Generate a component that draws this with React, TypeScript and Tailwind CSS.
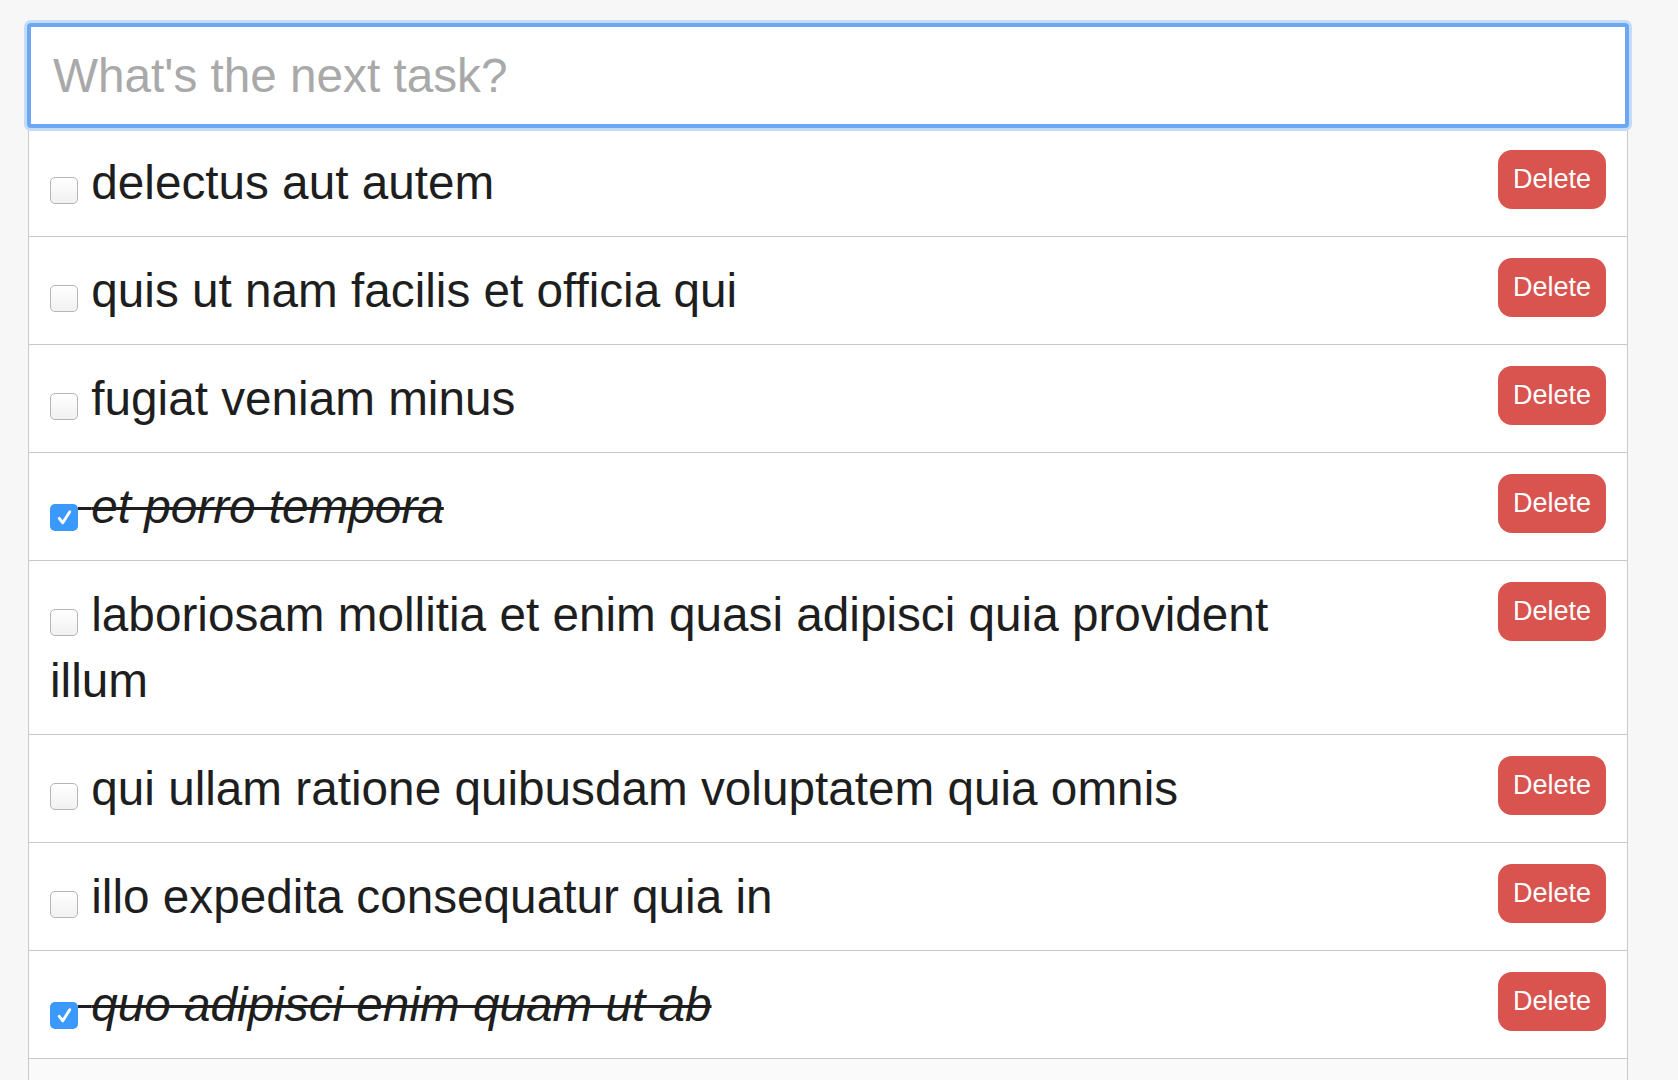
import React from 'react';

type Task = { id: number; title: string; done: boolean };

const tasks: Task[] = [
  { id: 1, title: 'delectus aut autem', done: false },
  { id: 2, title: 'quis ut nam facilis et officia qui', done: false },
  { id: 3, title: 'fugiat veniam minus', done: false },
  { id: 4, title: 'et porro tempora', done: true },
  { id: 5, title: 'laboriosam mollitia et enim quasi adipisci quia provident illum', done: false },
  { id: 6, title: 'qui ullam ratione quibusdam voluptatem quia omnis', done: false },
  { id: 7, title: 'illo expedita consequatur quia in', done: false },
  { id: 8, title: 'quo adipisci enim quam ut ab', done: true },
];

const Checkbox = ({ checked }: { checked: boolean }) =>
  checked ? (
    <span className="inline-flex items-center justify-center w-[28px] h-[27px] rounded-[5px] bg-[#3b99fc] align-[-5px]">
      <svg viewBox="0 0 16 16" className="w-[21px] h-[21px]" fill="none">
        <path d="M4 8.6 L6.7 12 L12 3.6" stroke="#fff" strokeWidth="2.2" strokeLinecap="round" strokeLinejoin="round" />
      </svg>
    </span>
  ) : (
    <span className="inline-block w-[28px] h-[27px] rounded-[5px] border border-[#b5b5b5] bg-gradient-to-b from-white to-[#f1f1f1] align-[-5px]" />
  );

const TaskRow = ({ task }: { task: Task }) => (
  <li className="flex items-start justify-between border-b border-[#c9c9c9] px-[21px] py-[20.5px]">
    <div className="w-[1280px] text-[47.7px] leading-[66px] text-[#1e1e1e]">
      <Checkbox checked={task.done} />
      <span className={task.done ? 'italic line-through decoration-[3px]' : ''}> {task.title}</span>
    </div>
    <button className="shrink-0 w-[108px] h-[59px] rounded-[14px] bg-[#d9534f] text-white text-[27px] leading-none">
      Delete
    </button>
  </li>
);

export default function App() {
  return (
    <div
      className="min-h-screen bg-[#f7f7f7] pt-[24px] pl-[28px]"
      style={{ fontFamily: '"Liberation Sans", Arial, Helvetica, sans-serif' }}
    >
      <div className="w-[1600px]">
        <input
          type="text"
          placeholder="What's the next task?"
          className="relative z-10 block w-full h-[103px] bg-white border-[3px] border-[#6ea7f1] rounded-[3px] shadow-[0_0_0_1px_#6ea7f1,0_0_0_4px_#c4dbf9] px-[22px] text-[47.7px] text-[#1e1e1e] placeholder:text-[#a9a9a9] outline-none"
        />
        <ul className="mt-[2px] bg-white border-x border-[#c9c9c9]">
          {tasks.map((task) => (
            <TaskRow key={task.id} task={task} />
          ))}
          <li className="h-[60px] bg-[#fafafa]" />
        </ul>
      </div>
    </div>
  );
}
